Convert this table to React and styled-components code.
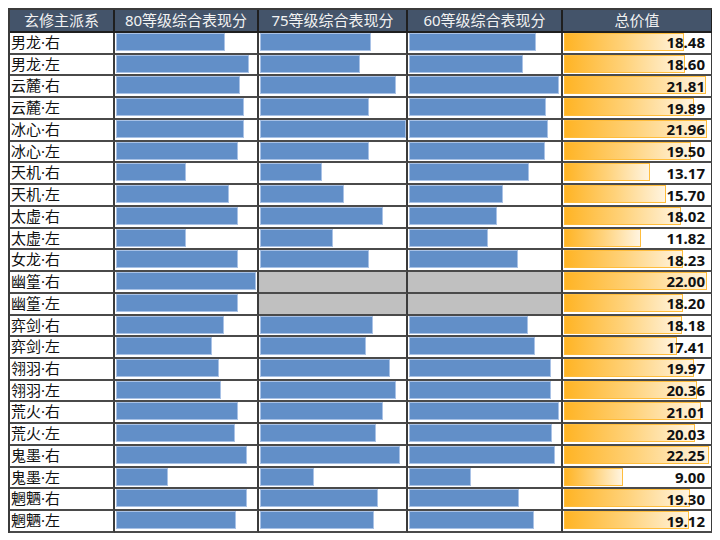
import React from 'react'
import styled, { createGlobalStyle } from 'styled-components';

const GlobalStyle = createGlobalStyle`
    body{
        margin: 8px;
        background: #ffffff;
        font-family: "Noto Sans", "Noto Sans CJK SC", sans-serif;
    }
`;

const MAX_TOTAL = 22.25;
const TOTAL_SPAN = 145;

// bar widths in px for 80 / 75 / 60, null = no data
const rows = [
    ['男龙·右', 109, 111, 127, '18.48'],
    ['男龙·左', 133, 100, 114, '18.60'],
    ['云麓·右', 124, 136, 150, '21.81'],
    ['云麓·左', 128, 109, 137, '19.89'],
    ['冰心·右', 128, 146, 139, '21.96'],
    ['冰心·左', 122, 109, 136, '19.50'],
    ['天机·右', 70, 62, 120, '13.17'],
    ['天机·左', 113, 84, 94, '15.70'],
    ['太虚·右', 122, 123, 88, '18.02'],
    ['太虚·左', 70, 73, 79, '11.82'],
    ['女龙·右', 122, 109, 109, '18.23'],
    ['幽篁·右', 140, null, null, '22.00'],
    ['幽篁·左', 122, null, null, '18.20'],
    ['弈剑·右', 108, 113, 119, '18.18'],
    ['弈剑·左', 96, 106, 126, '17.41'],
    ['翎羽·右', 103, 130, 142, '19.97'],
    ['翎羽·左', 105, 136, 142, '20.36'],
    ['荒火·右', 122, 123, 150, '21.01'],
    ['荒火·左', 119, 116, 143, '20.03'],
    ['鬼墨·右', 131, 140, 146, '22.25'],
    ['鬼墨·左', 52, 54, 62, '9.00'],
    ['魍魉·右', 131, 118, 110, '19.30'],
    ['魍魉·左', 120, 114, 125, '19.12'],
];

const App = () => {
    return (
        <>
            <GlobalStyle />
            <TableStyle>
                <HeadCell>玄修主派系</HeadCell>
                <HeadCell>80等级综合表现分</HeadCell>
                <HeadCell>75等级综合表现分</HeadCell>
                <HeadCell>60等级综合表现分</HeadCell>
                <HeadCell>总价值</HeadCell>
                {rows.map(([name, a, b, c, total]) => (
                    <React.Fragment key={name}>
                        <NameCell>{name}</NameCell>
                        {[a, b, c].map((w, i) => (
                            <BarCell key={i} $empty={w === null}>
                                {w !== null && <Bar style={{ width: w }} />}
                            </BarCell>
                        ))}
                        <TotalCell>
                            <TotalBar style={{ width: Math.round(parseFloat(total) / MAX_TOTAL * TOTAL_SPAN) }} />
                            <span>{total}</span>
                        </TotalCell>
                    </React.Fragment>
                ))}
            </TableStyle>
        </>
    )
}

const TableStyle = styled.div`
    display: grid;
    grid-template-columns: 105px 144px 149px 155px 150px;
    grid-template-rows: 23px;
    grid-auto-rows: 21.74px;
    width: max-content;
    border-top: 2px solid #3b3b3b;
    border-left: 2px solid #3b3b3b;
    box-shadow: 1px 1px 2px rgba(0,0,0,0.25);
    & > div{
        box-sizing: border-box;
        border-right: 2px solid #3b3b3b;
        border-bottom: 2px solid #4a4a4a;
    }
`;

const HeadCell = styled.div`
    background: #44546a;
    color: #f2f2f2;
    font-family: "Noto Sans", "Noto Sans CJK SC", sans-serif;
    font-size: 15px;
    line-height: 21px;
    text-align: center;
    border-right-color: #1f1f1f !important;
    border-bottom-color: #1f1f1f !important;
`;

const NameCell = styled.div`
    font-family: "Noto Sans", "Noto Sans CJK SC", sans-serif;
    font-size: 15px;
    line-height: 19px;
    color: #111;
    padding-left: 1px;
    white-space: nowrap;
`;

const BarCell = styled.div`
    background: ${p => p.$empty ? '#c0c0c0' : '#ffffff'};
    padding-left: 1px;
`;

const Bar = styled.div`
    height: 18px;
    box-sizing: border-box;
    background: #628fc8;
    border: 1px solid #a9c2e6;
`;

const TotalCell = styled.div`
    position: relative;
    display: flex;
    justify-content: flex-end;
    align-items: center;
    padding-right: 6px;
    span{
        position: relative;
        font-family: "Noto Sans", sans-serif;
        font-weight: 700;
        font-size: 15px;
        line-height: 19px;
        color: #111;
    }
`;

const TotalBar = styled.div`
    position: absolute;
    left: 1px;
    top: 0;
    height: 18px;
    box-sizing: border-box;
    background: linear-gradient(to right, #ffb425 0%, #ffd27a 50%, #fff4e0 100%);
    border: 1px solid #ffbd3c;
`;

export default App;
